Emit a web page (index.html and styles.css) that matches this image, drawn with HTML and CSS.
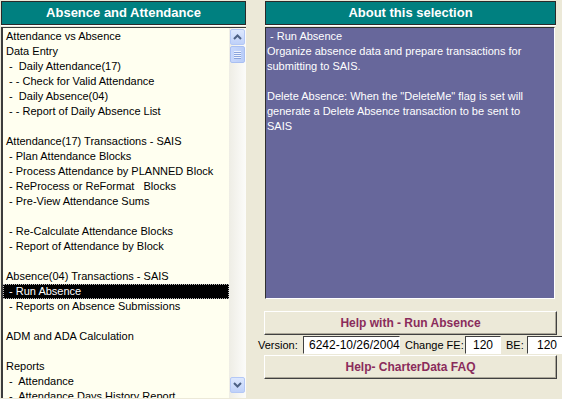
FILE: index.html
```html
<!DOCTYPE html>
<html>
<head>
<meta charset="utf-8">
<link rel="stylesheet" href="styles.css">
</head>
<body>
<div class="app">
  <div class="left">
    <div class="hdr">Absence and Attendance</div>
    <div class="list">
      <div class="items">
        <div class="row">Attendance vs Absence</div>
        <div class="row">Data Entry</div>
        <div class="row"> -  Daily Attendance(17)</div>
        <div class="row"> - - Check for Valid Attendance</div>
        <div class="row"> -  Daily Absence(04)</div>
        <div class="row"> - - Report of Daily Absence List</div>
        <div class="row"></div>
        <div class="row">Attendance(17) Transactions - SAIS</div>
        <div class="row"> - Plan Attendance Blocks</div>
        <div class="row"> - Process Attendance by PLANNED Block</div>
        <div class="row"> - ReProcess or ReFormat   Blocks</div>
        <div class="row"> - Pre-View Attendance Sums</div>
        <div class="row"></div>
        <div class="row"> - Re-Calculate Attendance Blocks</div>
        <div class="row"> - Report of Attendance by Block</div>
        <div class="row"></div>
        <div class="row">Absence(04) Transactions - SAIS</div>
        <div class="row sel"> - Run Absence</div>
        <div class="row"> - Reports on Absence Submissions</div>
        <div class="row"></div>
        <div class="row">ADM and ADA Calculation</div>
        <div class="row"></div>
        <div class="row">Reports</div>
        <div class="row"> -  Attendance</div>
        <div class="row"> -  Attendance Days History Report</div>
      </div>
      <div class="sbar">
        <div class="sbtn"><svg width="9" height="6" viewBox="0 0 9 6"><path d="M1 5 L4.5 1.5 L8 5" fill="none" stroke="#4d6185" stroke-width="2"/></svg></div>
        <div class="thumb"><span></span><span></span><span></span><span></span></div>
        <div class="track"></div>
        <div class="sbtn"><svg width="9" height="6" viewBox="0 0 9 6"><path d="M1 1 L4.5 4.5 L8 1" fill="none" stroke="#4d6185" stroke-width="2"/></svg></div>
      </div>
    </div>
  </div>
  <div class="right">
    <div class="hdr rhdr">About this selection</div>
    <div class="about"> - Run Absence<br>Organize absence data and prepare transactions for<br>submitting to SAIS.<br><br>Delete Absence: When the "DeleteMe" flag is set will<br>generate a Delete Absence transaction to be sent to<br>SAIS</div>
    <div class="btn">Help with - Run Absence</div>
    <div class="verrow">
      <span class="lbl l1">Version:</span>
      <span class="inp w1">6242-10/26/2004</span>
      <span class="lbl l2">Change FE:</span>
      <span class="inp w2">120</span>
      <span class="lbl l3">BE:</span>
      <span class="inp w3">120</span>
    </div>
    <div class="btn">Help- CharterData FAQ</div>
  </div>
</div>
</body>
</html>
```
FILE: styles.css
```css
html, body {
  margin: 0;
  padding: 0;
}
body {
  background: #ECE9D8;
  width: 562px;
  height: 399px;
  overflow: hidden;
  font-family: "Liberation Sans", Arial, sans-serif;
}
.app {
  display: flex;
  padding: 1px 0 0 1px;
  height: 398px;
  box-sizing: border-box;
}
.left {
  width: 245px;
  display: flex;
  flex-direction: column;
  flex: none;
}
.hdr {
  height: 22px;
  line-height: 22px;
  background: #008080;
  color: #fff;
  font-weight: bold;
  font-size: 13px;
  text-align: center;
  border: 1px solid #2a2a2a;
  box-shadow: 0 1px 0 #fff;
}
.list {
  margin-top: 2px;
  flex: 1;
  min-height: 0;
  display: flex;
  background: #FFFFF0;
  border-left: 2px solid #3c3c3c;
  border-top: 1px solid #3c3c3c;
  overflow: hidden;
}
.items {
  flex: 1;
  padding-top: 1px;
  overflow: hidden;
  font-size: 11px;
  color: #000;
}
.row {
  height: 15px;
  line-height: 15px;
  padding-left: 3px;
  white-space: pre;
  box-sizing: border-box;
}
.row.sel {
  background: #000;
  color: #fff;
  border: 1px dotted #bbb;
  line-height: 13px;
  padding-left: 2px;
}
.sbar {
  width: 17px;
  flex: none;
  display: flex;
  flex-direction: column;
  background: linear-gradient(to right, #eeede5, #fcfcfa);
  padding: 1px 0 5px 1px;
  box-sizing: border-box;
}
.sbtn {
  height: 16px;
  width: 15px;
  box-sizing: border-box;
  border: 1px solid #b4c8f6;
  border-radius: 2px;
  background: linear-gradient(to bottom, #dde8fe, #bfd1f9);
  display: flex;
  align-items: center;
  justify-content: center;
}
.thumb {
  margin-top: 1px;
  height: 17px;
  width: 15px;
  box-sizing: border-box;
  border: 1px solid #a9bff2;
  border-radius: 2px;
  background: linear-gradient(to right, #c8d8fc, #b9cdf8);
  display: flex;
  flex-direction: column;
  align-items: center;
  justify-content: center;
  gap: 1px;
}
.thumb span {
  display: block;
  width: 7px;
  height: 1px;
  background: #eef3fe;
  box-shadow: 0 1px 0 #8aa4dd;
}
.track {
  flex: 1;
}
.right {
  margin-left: 18px;
  width: 293px;
  flex: none;
  display: flex;
  flex-direction: column;
}
.rhdr {
  margin-left: 1px;
  width: 289px;
}
.about {
  margin-top: 2px;
  margin-left: 1px;
  height: 272px;
  width: 290px;
  box-sizing: border-box;
  background: #67679b;
  color: #fff;
  font-size: 11px;
  line-height: 15px;
  padding: 1px 0 0 1px;
  border-top: 1px solid #303030;
  border-left: 1px solid #303030;
  border-right: 1px solid #fff;
  border-bottom: 1px solid #fff;
  white-space: pre-wrap;
}
.btn {
  margin-top: 12px;
  height: 24px;
  line-height: 22px;
  box-sizing: border-box;
  border-top: 1px solid #fff;
  border-left: 1px solid #fff;
  border-right: 1px solid #404040;
  border-bottom: 1px solid #404040;
  box-shadow: inset -1px -1px 0 #aca899;
  text-align: center;
  font-weight: bold;
  font-size: 12px;
  color: #8a2c5b;
}
.verrow + .btn {
  margin-top: 0;
}
.verrow {
  margin-left: -6px;
  width: 305px;
  height: 20px;
  display: flex;
  align-items: center;
  font-size: 12px;
  color: #000;
  white-space: nowrap;
}
.lbl {
  flex: none;
  box-sizing: border-box;
  font-size: 11px;
}
.l1 { width: 45px; }
.l2 { width: 65px; padding-left: 5px; }
.l3 { width: 26px; padding-left: 5px; }
.inp {
  flex: none;
  height: 18px;
  line-height: 16px;
  box-sizing: border-box;
  background: #fff;
  border-top: 1px solid #404040;
  border-left: 1px solid #404040;
  border-right: 1px solid #fff;
  border-bottom: 1px solid #fff;
  text-align: center;
}
.w1 { width: 97px; text-align: left; padding-left: 5px; }
.w2 { width: 36px; }
.w3 { width: 40px; }
```
